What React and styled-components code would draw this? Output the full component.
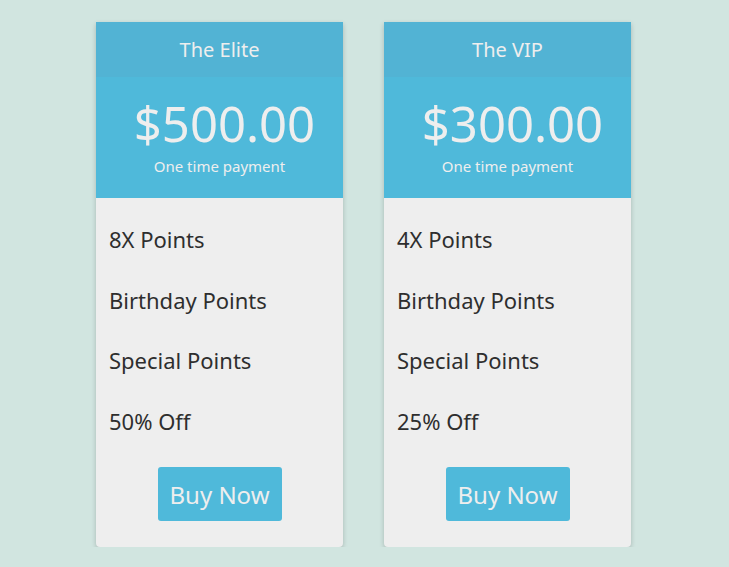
import React from 'react'
import styled, { createGlobalStyle } from 'styled-components'

const GlobalStyle = createGlobalStyle`
  body {
    margin: 0;
    background: #d1e5e0;
    font-family: 'Noto Sans', 'Open Sans', sans-serif;
  }
`

const plans = [
  { name: 'The Elite', price: '$500.00', features: ['8X Points', 'Birthday Points', 'Special Points', '50% Off'] },
  { name: 'The VIP', price: '$300.00', features: ['4X Points', 'Birthday Points', 'Special Points', '25% Off'] },
]

const App = () => {
  return (
    <Page>
      <GlobalStyle />
      {plans.map(plan => (
        <Card key={plan.name}>
          <Title>{plan.name}</Title>
          <PriceBox>
            <Price>{plan.price}</Price>
            <PriceNote>One time payment</PriceNote>
          </PriceBox>
          <Features>
            {plan.features.map(f => (
              <li key={f}>{f}</li>
            ))}
          </Features>
          <BuyButton>Buy Now</BuyButton>
        </Card>
      ))}
    </Page>
  )
}

export default App

const Page = styled.div`
  display: flex;
  justify-content: center;
  gap: 41px;
  padding: 22px 2px 0 0;
`

const Card = styled.div`
  width: 247px;
  height: 525px;
  background: #eeeeee;
  border-radius: 0 0 4px 4px;
  box-shadow: 0 2px 5px rgba(0, 0, 0, 0.2);
  display: flex;
  flex-direction: column;
  align-items: center;
`

const Title = styled.div`
  width: 100%;
  height: 55px;
  background: #52b3d4;
  color: #eeeeee;
  font-size: 20px;
  display: flex;
  align-items: center;
  justify-content: center;
`

const PriceBox = styled.div`
  width: 100%;
  height: 121px;
  background: #4fb9da;
  color: #eeeeee;
  text-align: center;
  box-sizing: border-box;
  padding-top: 15px;
`

const Price = styled.div`
  font-size: 49px;
  line-height: 63px;
  padding-left: 10px;
`

const PriceNote = styled.div`
  font-size: 15px;
  line-height: 20px;
  margin-top: 1px;
`

const Features = styled.ul`
  list-style: none;
  margin: 0;
  padding: 25px 13px 0;
  width: 100%;
  box-sizing: border-box;
  color: #2e2e2e;
  font-size: 22px;

  & li {
    height: 60.5px;
    line-height: 32px;
  }
`

const BuyButton = styled.button`
  margin-top: 2px;
  width: 124px;
  height: 54px;
  border: none;
  border-radius: 3px;
  background: #4fb9da;
  color: #eeeeee;
  font-family: inherit;
  font-size: 24px;
  cursor: pointer;
`
